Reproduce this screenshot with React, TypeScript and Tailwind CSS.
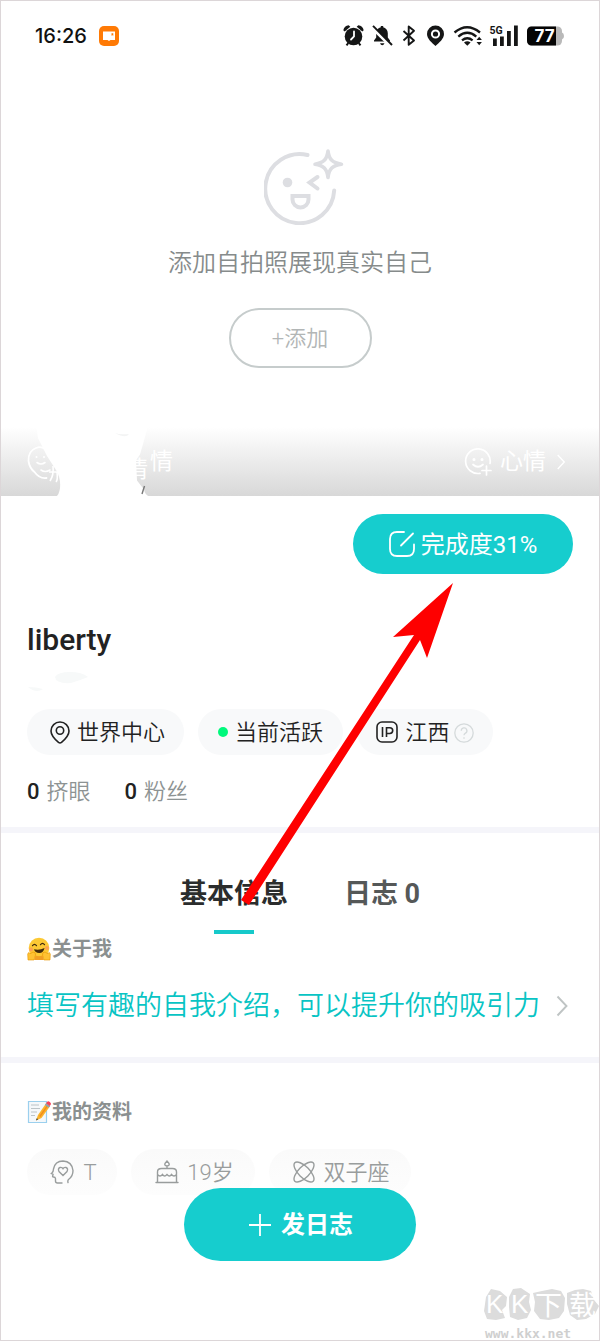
import type { ReactNode } from "react";

function StatusIcons() {
  return (
    <svg className="h-8 w-[222px]" viewBox="342 20 222 32" aria-label="Status" role="img">
      <g fill="#151616" stroke="none">
        <circle cx="353.5" cy="36.5" r="8.8" />
        <path d="M343.3 30.2q1-4.2 5.4-4.9l1.6 1.5-5.6 4.6zM363.7 30.2q-1-4.2-5.4-4.9l-1.6 1.5 5.6 4.6z" />
      </g>
      <path d="M354 31.5v5l-3 3" fill="none" stroke="#fff" strokeWidth="1.8" strokeLinecap="round" />
      <path d="M348.3 43l-1.8 2.4M358.7 43l1.8 2.4" stroke="#151616" strokeWidth="2" />
      <path d="M374 41.6h16v-1.2l-2.2-3v-4.2c0-3.4-2.2-5.4-4.6-6v-1.3h-2.4v1.3c-2.6.6-4.6 2.6-4.6 6v4.2l-2.2 3zM380 43.2h4.500q-.8 2-2.250 2t-2.250-2z" fill="#151616" />
      <path d="M372 27.500l18.500 18" stroke="#fff" strokeWidth="3.500" />
      <path d="M373 25.800l19 19.200" stroke="#151616" strokeWidth="1.900" />
      <path d="M403.500 31l10.500 9.500-5.300 4.300V26.500l5.300 4.300-10.500 9.700" fill="none" stroke="#151616" strokeWidth="1.900" strokeLinejoin="round" />
      <path d="M435.500 25.500a8.500 8.500 0 0 0-8.500 8.500c0 5 5 8.700 8.500 12 3.500-3.300 8.500-7 8.500-12a8.500 8.500 0 0 0-8.500-8.500z" fill="#151616" />
      <circle cx="435.500" cy="34" r="3.600" fill="#151616" stroke="#fff" strokeWidth="2" />
      <path d="M454.500 32.500q12.500-10.500 25.500 0M458.300 36.600q9-7.600 18 0M462 40.400q5.300-4.300 10.600 0" fill="none" stroke="#151616" strokeWidth="2.300" />
      <path d="M464 42.500q3.300-2.600 6.600 0l-3.300 3.200z" fill="#151616" />
      <path d="M476.500 40l2.700-3.200 2.700 3.200zM476.500 42l2.700 3.200 2.700-3.200z" fill="#151616" />
      <text x="489.500" y="33.500" fontFamily="Roboto" fontSize="10.500" fontWeight="700" fill="#151616">5G</text>
      <path d="M493 38.500h3.800v7.500h-3.800zM500 36.500h3.800v9.500h-3.800zM507 31h3.800v15h-3.800zM514 25.500h3.800v20.500h-3.800z" fill="#151616" />
      <rect x="527" y="26.500" width="35" height="19" rx="4.500" fill="#b9b9b9" />
      <path d="M562 32.500q2 .5 2 3.500t-2 3.500z" fill="#b9b9b9" />
      <path d="M531.500 26.500h24.500v19h-24.500a4.500 4.500 0 0 1-4.500-4.500v-10a4.500 4.500 0 0 1 4.500-4.500z" fill="#050505" />
      <text x="534.500" y="42.300" fontFamily="Inter" fontSize="17" fontWeight="700" fill="#fff">77</text>
    </svg>
  );
}

function WinkIcon() {
  return (
    <svg className="h-[76px] w-20" viewBox="264 149 80 76" fill="none" stroke="#dddee2" strokeWidth="4" strokeLinecap="round" aria-hidden="true">
      <path d="M307.500 155a34.500 34.500 0 1 0 26.700 35.500" />
      <circle cx="287.500" cy="182.500" r="4.800" fill="#dddee2" stroke="none" />
      <path d="M317.500 177l-8 5.500 8 6" strokeLinejoin="miter" />
      <path d="M292.500 196h16v3.500a8 8 0 0 1-16 0z" />
      <path d="M328 151c1 8.500 4.500 12 13.500 13.200-9 1.200-12.500 4.700-13.500 13.300-1-8.600-4.500-12.100-13-13.300 8.500-1.200 12-4.700 13-13.200z" strokeLinejoin="round" strokeWidth="3.600" />
    </svg>
  );
}

function MoodIcon() {
  return (
    <svg className="size-7" viewBox="0 0 28 28" fill="none" stroke="#fff" strokeWidth="1.700" strokeLinecap="round" aria-hidden="true">
      <path d="M16 25.300A12.300 12.300 0 1 1 26 15.500M9 16.500q5 4.500 10 0M22.500 18v9M18 22.500h9" />
      <circle cx="10" cy="11.500" r=".7" fill="#fff" />
      <circle cx="18" cy="11.500" r=".7" fill="#fff" />
    </svg>
  );
}

function HugEmoji() {
  return (
    <svg className="size-6" viewBox="0 0 24 24" aria-hidden="true">
      <circle cx="12" cy="11" r="10.300" fill="#fcc934" />
      <path d="M2.500 15a10.300 10.300 0 0 0 19 0l-2 4.500H4.500z" fill="#f5b025" />
      <path d="M5.500 8.700q2-2.600 4 0M13.500 7.700q2-2.600 4 0" fill="none" stroke="#422b0d" strokeWidth="1.200" strokeLinecap="round" />
      <path d="M7 12.300q5.500 1.200 10.500-1.200-1 5-5.200 5T7 12.300z" fill="#422b0d" />
      <circle cx="4" cy="12.500" r="2" fill="#ff8a65" opacity=".6" />
      <circle cx="20" cy="11" r="2" fill="#ff8a65" opacity=".6" />
      <path d="M1 23l-.3-6q1-3 2.300-.2l3-1.800q3 0 2.500 3L7 23zM23 23l.3-6q-1-3-2.300-.2l-3-1.800q-3 0-2.500 3L17 23z" fill="#ffc233" stroke="#e59600" strokeWidth=".6" />
      <path d="M7 23l1.700-4.500q3.300 1.500 6.600 0L17 23z" fill="#f29f23" />
    </svg>
  );
}

function MemoEmoji() {
  return (
    <svg className="size-6" viewBox="0 0 24 24" aria-hidden="true">
      <path d="M1.500 1.500h18v21h-18z" fill="#f5f8fa" stroke="#9bd0ee" strokeWidth="1.200" />
      <path d="M4 5h8M4 8.500h9M4 12h6M4 15.500h4" stroke="#b6bdc2" strokeWidth=".9" />
      <path d="M9 20.500l2-5.500L19 3.500l4 2.800L14.500 18z" fill="#fbb32b" />
      <path d="M12.800 16.500L21 5" stroke="#f28c1d" strokeWidth="1.300" />
      <path d="M17.800 5l1.300-1.800 4 2.800-1.300 1.800z" fill="#90a4ae" />
      <path d="M19 3.200l1.200-1.500q1-1 2.600.2t1 2.600L22.800 6z" fill="#f4435c" />
      <path d="M9 20.500l.8-2.200 1.400 1z" fill="#333" />
    </svg>
  );
}

function Chevron({ className }: { className: string }) {
  return (
    <svg className={className} viewBox="0 0 12 22" fill="none" stroke="currentColor" strokeWidth="1.900" aria-hidden="true">
      <path d="M1.500 1.500l9 9.500-9 9.500" />
    </svg>
  );
}

function Pill({ children, className }: { children: ReactNode; className: string }) {
  return <li className={`flex h-[46px] shrink-0 items-center justify-center rounded-full text-[22px] whitespace-nowrap ${className}`}>{children}</li>;
}

function Watermark() {
  return (
    <div className="absolute -right-px -bottom-px h-[60px] w-[121px] bg-white">
      <svg className="h-full w-full" viewBox="479 1281 121 60" role="img" aria-label="KK下载 www.kkx.net">
        <g fill="#dcdcdc">
          <path d="M486 1297l5-8 9 2 7 6-1 9-4 4 3 8-9 2-9-1-3-8z" />
          <path d="M509 1297l4-8 8-1 9 6-1 8 2 8-4 8-9 2-8-3-1-10z" />
          <path d="M533 1293l9-2 10-2 9 2 4 7-1 13-5 7-10 2-9-1-6-8 1-9z" />
          <path d="M567 1293l8-3 8-1 8 2 3 9 5 6-4 8-9 5-9 1-7-5-3-11z" />
        </g>
        <text x="486" y="1313" fontFamily="Liberation Sans" fontSize="26" fill="#fff">K</text>
        <text x="511" y="1313" fontFamily="Liberation Sans" fontSize="26" fill="#fff">K</text>
        <text x="535" y="1315" fontFamily="Noto Sans CJK SC" fontSize="27" fill="#fff">下</text>
        <text x="569" y="1315" fontFamily="Noto Sans CJK SC" fontSize="27" fill="#fff">载</text>
        <text x="485" y="1338" fontFamily="DejaVu Sans Mono" fontSize="13" fontWeight="700" fill="#cfcfcf">www.kkx.net</text>
      </svg>
    </div>
  );
}

export default function App() {
  return (
    <main className="relative min-h-screen overflow-hidden border border-[#dcd6d8] bg-white font-['Roboto','Noto_Sans_CJK_SC',sans-serif] text-[#222]">
      <header className="flex h-[70px] items-center justify-between pr-[35px] pl-[34px]">
        <div className="flex items-center gap-3">
          <time className="font-['Inter',sans-serif] text-[20px] leading-6 font-medium text-[#111]">16:26</time>
          <svg className="size-5" viewBox="0 0 20 20" aria-hidden="true">
            <rect width="20" height="20" rx="5" fill="#ff7a05" />
            <path d="M4 5.500h12v8.500h-4.500l-1.500 1-1.500-1H4z" fill="#fff" />
            <path d="M12.500 7.200h1.800v2.600l-.9-.6-.9.600z" fill="#ff7a05" />
          </svg>
        </div>
        <StatusIcons />
      </header>

      <section className="flex flex-col items-center pt-[78px]">
        <div className="pl-2"><WinkIcon /></div>
        <p className="mt-[22px] text-[24px] leading-8 font-[350] text-[#868b8b]">添加自拍照展现真实自己</p>
        <button type="button" className="mt-[29px] h-[60px] w-[143px] rounded-full border-2 border-[#c6cccc] text-[22px] font-[350] text-[#b2b6b6]">+添加</button>
        <div className="relative mt-[59px] flex h-[69px] w-full items-center justify-between bg-linear-to-b from-white to-[#d8d8d8] pr-[33px] pl-[26px] text-[23px] text-white">
          <svg className="absolute left-0 top-0 h-[70px] w-[180px]" viewBox="1 427 180 70" aria-hidden="true">
            <path d="M45 449q-4-3-9-1-8 3-7.500 13 1 7 6 11 5 7 12 6" fill="none" stroke="#fff" strokeWidth="1.800" strokeLinecap="round" />
            <path d="M37 462.500q4 3 8 0M41 470q4 3 9 0" fill="none" stroke="#fff" strokeWidth="1.600" strokeLinecap="round" />
            <circle cx="36.500" cy="457" r="1" fill="#fff" />
            <circle cx="44" cy="457" r="1" fill="#fff" />
            <path d="M49 472h9M53 466q1 9-3 15M57 472q1 8-1 10" fill="none" stroke="#fff" strokeWidth="1.600" />
          </svg>
          <div className="flex items-center pl-[98px]">
            <span className="pt-4 leading-8">情</span>
            <span className="pl-[2px] leading-8">情</span>
          </div>
          <svg className="absolute left-0 top-0 h-[70px] w-[180px]" viewBox="1 427 180 70" aria-hidden="true">
            <path d="M36 426l2 12 9 18 9 14q5 8 4 18-1 7-4 8.500h94q-5-1-6-7l-7-9-1-20 4-6 8-28z" fill="#fff" />
            <path d="M115 433q5 2 14 1-3 5-14-1z" fill="#f3f4f4" />
            <path d="M144.500 486l-2.500 8" stroke="#777" strokeWidth="1.400" />
          </svg>
          <button type="button" className="flex items-center">
            <MoodIcon />
            <span className="ml-2 leading-8">心情</span>
            <Chevron className="ml-[10px] h-4 w-[10px]" />
          </button>
        </div>
      </section>

      <section className="px-[26px] pt-[18px] pb-[20px]">
        <div className="flex justify-end">
          <button type="button" className="flex h-[60px] w-[220px] items-center justify-center gap-[6px] rounded-full bg-[#16cdce] text-[24px] text-white">
            <svg className="size-[26px]" viewBox="0 0 26 26" fill="none" stroke="currentColor" strokeWidth="1.800" strokeLinecap="round" aria-hidden="true">
              <path d="M15 1H8Q1 1 1 8v10q0 7 7 7h10q7 0 7-7v-4.500M12 14.500L24 2.500" />
            </svg>
            <span className="pt-px">完成度31%</span>
          </button>
        </div>
        <h1 className="mt-[46px] text-[30px] leading-10 font-medium">liberty</h1>
        <svg className="mt-[10px] h-[22px] w-[64px]" viewBox="0 0 64 22" fill="#f7f9f9" aria-hidden="true">
          <path d="M28 7q3-5 15-5t18 5q-7 3-17 6-15 1-16-6zM1 17q8 0 15 2-7 5-15-2z" />
        </svg>
        <ul className="mt-[17px] flex gap-[14px]">
          <Pill className="w-[157px] gap-[7px] bg-[#f8f9fa] pl-1">
            <svg className="h-[23px] w-5" viewBox="0 0 20 23" fill="none" stroke="currentColor" strokeWidth="1.600" aria-hidden="true">
              <path d="M10 1a9 9 0 0 0-9 9c0 4.500 3.500 8 7.500 11.400q1.500 1.200 3 0C15.500 18 19 14.500 19 10a9 9 0 0 0-9-9z" />
              <circle cx="10" cy="9.500" r="3.700" />
            </svg>
            <span className="pt-px font-[350]">世界中心</span>
          </Pill>
          <Pill className="w-[145px] gap-[7px] bg-[#f8f9fa]">
            <span className="size-[10px] rounded-full bg-[#00f97c]" />
            <span className="pt-px font-[350]">当前活跃</span>
          </Pill>
          <Pill className="w-[136px] gap-[7px] bg-[#f8f9fa]">
            <svg className="size-[22px]" viewBox="0 0 22 22" fill="none" stroke="currentColor" strokeWidth="1.600" aria-hidden="true">
              <rect x="1" y="1" width="20" height="20" rx="5" />
              <path d="M6.500 6v10M10.500 16V6.700h3.300a2.900 2.900 0 0 1 0 5.800h-3.300" />
            </svg>
            <span className="flex items-center gap-1 pt-px font-[350]">
              江西
              <svg className="size-5" viewBox="0 0 20 20" fill="none" stroke="#d5dadb" strokeWidth="1.300" aria-hidden="true">
                <circle cx="10" cy="10" r="9.200" />
                <path d="M7.300 7.800a2.800 2.800 0 1 1 4.200 2.300Q10 11 10 12.300M10 14.200v1.500" />
              </svg>
            </span>
          </Pill>
        </ul>
        <div className="mt-[22px] flex gap-[34px] text-[22px] leading-[30px]">
          <p className="flex gap-[7px] font-medium">0 <span className="font-[350] text-[#8d9393]">挤眼</span></p>
          <p className="flex gap-[7px] font-medium">0 <span className="font-[350] text-[#8d9393]">粉丝</span></p>
        </div>
      </section>

      <section className="border-t-6 border-[#f5f5fa] pt-[43px] pb-[33px]">
        <div className="flex items-start justify-center gap-14 text-[27px] leading-9 font-bold" role="tablist">
          <button type="button" role="tab" aria-selected="true" className="flex flex-col items-center gap-[18px] text-[#2b2d2d]">
            基本信息
            <span className="h-1 w-10 bg-[#16c9ca]" />
          </button>
          <button type="button" role="tab" aria-selected="false" className="text-[#555858]">日志 0</button>
        </div>
        <div className="pr-[31px] pl-[26px]">
          <h2 className="mt-[3px] flex items-center gap-px text-[20px] leading-6 font-bold text-[#8b9090]"><HugEmoji />关于我</h2>
          <a href="#about" className="mt-[27px] flex items-center justify-between text-[27px] leading-9 font-[350] whitespace-nowrap text-[#08c4c4]">
            填写有趣的自我介绍，可以提升你的吸引力
            <Chevron className="h-[22px] w-3 text-[#bfc4c4]" />
          </a>
        </div>
      </section>

      <section className="border-t-6 border-[#f5f5fa] px-[26px] pt-[37px]">
        <h2 className="flex items-center gap-px text-[20px] leading-6 font-bold text-[#8b9090]"><MemoEmoji />我的资料</h2>
        <ul className="mt-[25px] flex gap-[14px] font-[350] text-[#999d9d]">
          <Pill className="w-[90px] gap-[9px] bg-linear-to-b from-[#fafafa] to-[#fdfdfd] pl-[3px]">
            <svg className="size-6" viewBox="0 0 24 24" fill="none" stroke="currentColor" strokeWidth="1.400" strokeLinecap="round" aria-hidden="true">
              <path d="M12 23H7.500q-2 0-2-2v-2.500q-.2-1.500-2-1.500Q2 17 3 15q.5-1-1.500-1.500Q3.500 12 3.500 9 5 1 13 1q9 .5 10 9.500 0 6-4.500 9-1 1-.500 3" />
              <path d="M13 15.500l-4-4q-1.500-3 1-4 2-.5 3 1.200 1-1.700 3-1.200 2.500 1 1 4z" />
            </svg>
            T
          </Pill>
          <Pill className="w-[124px] gap-2 bg-linear-to-b from-[#fafafa] to-[#fdfdfd] pl-[3px]">
            <svg className="size-6" viewBox="0 0 24 24" fill="none" stroke="currentColor" strokeWidth="1.400" strokeLinecap="round" aria-hidden="true">
              <path d="M1 22.500h22M2.500 22V12q0-3.500 4-3.500h11q4 0 4 3.500v10M2.500 14.500q2.500 3 5 0 2 3 4.500 0 2.500 3 4.500 0 2.500 3 5 0M12 8.500V6M12 1q4.500 4.500 0 5-4.500-.5 0-5z" />
            </svg>
            19岁
          </Pill>
          <Pill className="w-[142px] gap-2 bg-linear-to-b from-[#fafafa] to-[#fdfdfd] pl-[3px]">
            <svg className="size-[22px]" viewBox="0 0 22 22" fill="none" stroke="currentColor" strokeWidth="1.400" aria-hidden="true">
              <ellipse cx="11" cy="11" rx="13" ry="5.500" transform="rotate(45 11 11)" />
              <ellipse cx="11" cy="11" rx="13" ry="5.500" transform="rotate(-45 11 11)" />
            </svg>
            双子座
          </Pill>
        </ul>
      </section>

      <button type="button" className="absolute bottom-[79px] left-1/2 flex h-[73px] w-[232px] -translate-x-1/2 items-center justify-center gap-[10px] rounded-full bg-[#16cdce] pl-[2px] text-[24px] font-bold text-white">
        <svg className="size-[22px]" viewBox="0 0 22 22" stroke="currentColor" strokeWidth="1.800" aria-hidden="true">
          <path d="M11 0v22M0 11h22" />
        </svg>
        发日志
      </button>

      <svg className="pointer-events-none absolute top-[582px] left-[240px] h-[322px] w-[214px]" viewBox="241 583 214 322" fill="#fe0000" aria-hidden="true">
        <path d="M453 583l-60 54 21-2-173 265 8 5 171-265 7 18z" />
      </svg>

      <Watermark />
    </main>
  );
}
